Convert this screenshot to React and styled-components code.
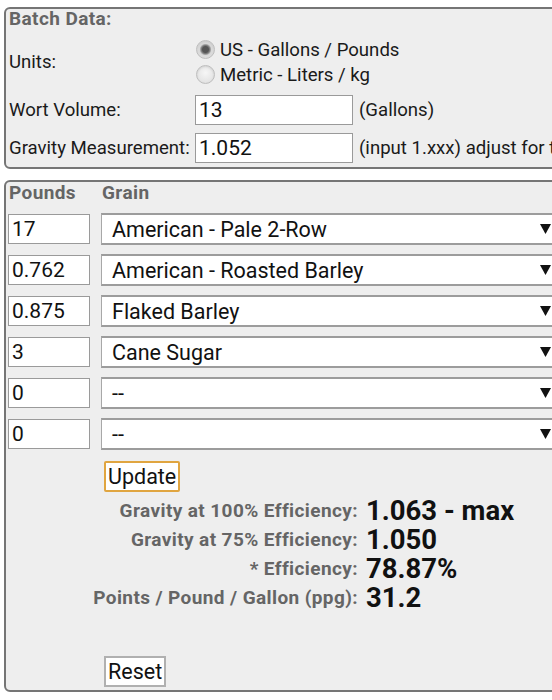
import React from "react";
import styled, { createGlobalStyle } from "styled-components";

const Global = createGlobalStyle`
  html, body { margin: 0; padding: 0; background: #ffffff; overflow: hidden; }
  body { font-family: Roboto, "Noto Sans", sans-serif; color: #111; }
`;

const Page = styled.div`
  width: 620px;
  padding: 7px 0 0 4px;
  display: flex;
  flex-direction: column;
  gap: 11px;
`;

const Box = styled.div`
  width: 560px;
  box-sizing: border-box;
  border: 2px solid #757575;
  border-radius: 6px;
  background: #eeeeee;
  padding: ${(p) => p.$pad || "0 0 4px 2px"};
`;

const BatchGrid = styled.div`
  display: grid;
  grid-template-columns: 187px auto;
  grid-template-rows: 20px 50px 30px 30px;
  row-gap: 8px;
  align-items: center;
  white-space: nowrap;
`;

const Title = styled.div`
  grid-column: 1 / span 2;
  font-size: 19px;
  font-weight: 700;
  letter-spacing: 0.4px;
  color: #656565;
  padding-left: 1px;
  line-height: 20px;
`;

const Label = styled.div`
  font-size: 18.6px;
  color: #1a1a1a;
  padding-left: 1px;
`;

const Field = styled.div`
  display: flex;
  align-items: center;
  gap: 6px;
  font-size: 18.6px;
  color: #1a1a1a;
`;

const TextInput = styled.input`
  box-sizing: border-box;
  width: ${(p) => p.$w || 158}px;
  height: 30px;
  border: 1px solid #9a9a9a;
  background: #fff;
  font-family: Roboto, sans-serif;
  font-size: 21px;
  color: #111;
  padding: 0 3px;
  margin: 0;
  outline: none;
`;

const RadioGroup = styled.div`
  display: flex;
  flex-direction: column;
`;

const RadioLine = styled.label`
  display: flex;
  align-items: center;
  height: 25px;
  gap: 5px;
  font-size: 18.6px;
  color: #1a1a1a;
`;

const RadioDot = styled.span`
  width: 19px;
  height: 19px;
  border-radius: 50%;
  box-sizing: border-box;
  border: 1px solid #bdbdbd;
  background: ${(p) =>
    p.$on
      ? "radial-gradient(circle at 50% 50%, #555 0, #555 3px, #888 4.5px, #d8d8d8 6px, #e8e8e8 100%)"
      : "radial-gradient(circle at 50% 40%, #f6f6f6 0, #dcdcdc 100%)"};
  box-shadow: inset 0 1px 2px rgba(0,0,0,0.1);
  margin-left: 1px;
`;

const GrainGrid = styled.div`
  display: grid;
  grid-template-columns: 82px 456px;
  grid-template-rows: 22px repeat(6, 32px);
  column-gap: 11px;
  row-gap: 9px;
  align-items: center;
`;

const Head = styled.div`
  font-size: 19px;
  font-weight: 700;
  letter-spacing: 0.4px;
  color: #656565;
  padding-left: 1px;
  line-height: 22px;
`;

const SelectBox = styled.div`
  box-sizing: border-box;
  height: 32px;
  background: #fff;
  border: 1px solid #a8a8a8;
  border-top: 2px solid #9c9c9c;
  border-bottom: 2px solid #9c9c9c;
  display: flex;
  align-items: center;
  justify-content: space-between;
  padding: 0 5px 0 10px;
  font-size: 21.5px;
  color: #111;
`;

const Arrow = () => (
  <svg width="11" height="10" viewBox="0 0 11 10">
    <path d="M0 0 H11 L5.5 10 Z" fill="#111" />
  </svg>
);

const Button = styled.button`
  box-sizing: border-box;
  align-self: flex-start;
  margin-left: 96px;
  height: 31px;
  padding: 0 2px;
  background: #fff;
  border: ${(p) => (p.$focus ? "2px solid #e0a540" : "2px solid #b0b0b0")};
  border-radius: ${(p) => (p.$focus ? "2px" : "0")};
  font-family: Roboto, sans-serif;
  font-size: 21.5px;
  color: #111;
`;

const GrainSection = styled.div`
  display: flex;
  flex-direction: column;
`;

const Results = styled.div`
  display: grid;
  grid-template-columns: 350px auto;
  grid-auto-rows: 29px;
  column-gap: 8px;
  align-items: center;
  margin-top: 4px;
  white-space: nowrap;
`;

const ResLabel = styled.div`
  text-align: right;
  font-size: 19px;
  font-weight: 700;
  letter-spacing: 0.4px;
  color: #656565;
`;

const ResValue = styled.div`
  font-size: 27.5px;
  font-weight: 700;
  color: #111;
  line-height: 29px;
`;

const Spacer = styled.div`
  height: ${(p) => p.$h}px;
`;

const grains = [
  ["17", "American - Pale 2-Row"],
  ["0.762", "American - Roasted Barley"],
  ["0.875", "Flaked Barley"],
  ["3", "Cane Sugar"],
  ["0", "--"],
  ["0", "--"],
];

const results = [
  ["Gravity at 100% Efficiency:", "1.063 - max"],
  ["Gravity at 75% Efficiency:", "1.050"],
  ["* Efficiency:", "78.87%"],
  ["Points / Pound / Gallon (ppg):", "31.2"],
];

export default function App() {
  return (
    <>
      <Global />
      <Page>
        <Box>
          <BatchGrid>
            <Title>Batch Data:</Title>
            <Label>Units:</Label>
            <RadioGroup>
              <RadioLine>
                <RadioDot $on />
                US - Gallons / Pounds
              </RadioLine>
              <RadioLine>
                <RadioDot />
                Metric - Liters / kg
              </RadioLine>
            </RadioGroup>
            <Label>Wort Volume:</Label>
            <Field>
              <TextInput readOnly defaultValue="13" />
              (Gallons)
            </Field>
            <Label>Gravity Measurement:</Label>
            <Field>
              <TextInput readOnly defaultValue="1.052" />
              (input 1.xxx) adjust for temperature
            </Field>
          </BatchGrid>
        </Box>
        <Box $pad="0 0 3px 2px">
          <GrainSection>
            <GrainGrid>
              <Head>Pounds</Head>
              <Head>Grain</Head>
              {grains.map(([lb, name], i) => (
                <React.Fragment key={i}>
                  <TextInput $w={82} readOnly defaultValue={lb} />
                  <SelectBox>
                    <span>{name}</span>
                    <Arrow />
                  </SelectBox>
                </React.Fragment>
              ))}
            </GrainGrid>
            <Spacer $h={11} />
            <Button $focus>Update</Button>
            <Results>
              {results.map(([l, v]) => (
                <React.Fragment key={l}>
                  <ResLabel>{l}</ResLabel>
                  <ResValue>{v}</ResValue>
                </React.Fragment>
              ))}
            </Results>
            <Spacer $h={44} />
            <Button>Reset</Button>
          </GrainSection>
        </Box>
      </Page>
    </>
  );
}
